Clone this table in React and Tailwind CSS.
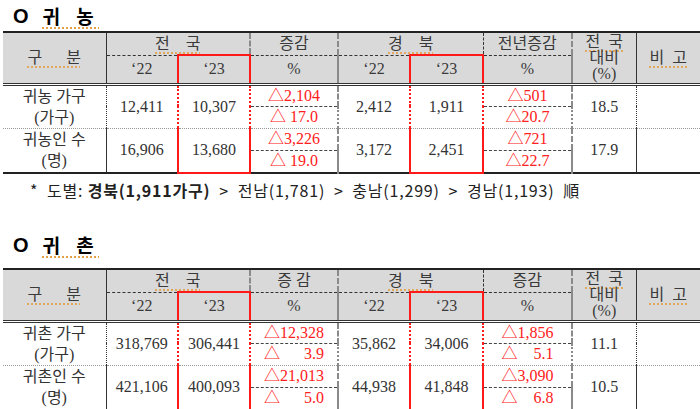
import React from 'react';

const serif = "font-['Liberation_Serif','Noto_Sans_CJK_KR',serif]";
const spell = 'underline decoration-dotted decoration-[#e39b3c] underline-offset-[4px]';

const farmData = {
  title: '귀 농',
  diffHead: '증감',
  diffHead2: '전년증감',
  rows: [
    { l1: '귀농 가구', l2: '(가구)', a: '12,411', b: '10,307', d1: '△2,104', d2: { t: '△ 17.0' }, e: '2,412', f: '1,911', g1: '△501', g2: { t: '△20.7' }, h: '18.5' },
    { l1: '귀농인 수', l2: '(명)', a: '16,906', b: '13,680', d1: '△3,226', d2: { t: '△ 19.0' }, e: '3,172', f: '2,451', g1: '△721', g2: { t: '△22.7' }, h: '17.9' },
  ],
};

const villageData = {
  title: '귀 촌',
  diffHead: '증 감',
  diffHead2: '증감',
  rows: [
    { l1: '귀촌 가구', l2: '(가구)', a: '318,769', b: '306,441', d1: '△12,328', d2: { n: '3.9', w: 60 }, e: '35,862', f: '34,006', g1: '△1,856', g2: { n: '5.1', w: 52 }, h: '11.1' },
    { l1: '귀촌인 수', l2: '(명)', a: '421,106', b: '400,093', d1: '△21,013', d2: { n: '5.0', w: 60 }, e: '44,938', f: '41,848', g1: '△3,090', g2: { n: '6.8', w: 52 }, h: '10.5' },
  ],
};

function Pct({ v }) {
  if (v.t) return <span>{v.t}</span>;
  return (
    <span className="inline-flex justify-between" style={{ width: v.w }}>
      <span>△</span>
      <span>{v.n}</span>
    </span>
  );
}

function Title({ text }) {
  return (
    <div className="flex items-center gap-[14px] pl-[13px] text-[19px] leading-[24px] font-bold text-black">
      <span className="font-['Liberation_Sans',sans-serif] text-[20px]">O</span>
      <span className={`font-['Noto_Sans_CJK_KR',sans-serif] tracking-[6px] ${spell}`}>{text}</span>
    </div>
  );
}

function DataTable({ data }) {
  const hd = 'bg-[#d9d9d9] text-[#3a3a3a] text-[16px] leading-[18px] text-center align-middle p-0';
  const td = 'text-[#333] text-[16px] leading-[18px] text-center align-middle p-0';
  const red = 'text-[#ff2020] text-[16px] leading-[18px] text-center align-middle p-0';
  const dbl = 'border-b-[3px] border-b-[#333] border-double';
  return (
    <table className={`ml-[3px] w-[697px] table-fixed border-collapse border-t-2 border-b-2 border-[#222] ${serif}`}>
      <colgroup>
        <col className="w-[103px]" />
        <col className="w-[72px]" />
        <col className="w-[72px]" />
        <col className="w-[88px]" />
        <col className="w-[72px]" />
        <col className="w-[73px]" />
        <col className="w-[89px]" />
        <col className="w-[64px]" />
        <col className="w-[64px]" />
      </colgroup>
      <thead>
        <tr className="h-[23px]">
          <td rowSpan={2} className={`${hd} ${dbl} border-r border-r-[#333]`}>
            <span className={`${spell} whitespace-pre`}>구      분</span>
          </td>
          <td colSpan={2} className={`${hd} border-b border-dashed border-b-[#333] border-r-2 border-r-[#8a8a8a]`}>
            <span className={`${spell} whitespace-pre`}>전    국</span>
          </td>
          <td className={`${hd} border-b border-dashed border-b-[#333] border-r-2 border-r-[#8a8a8a] whitespace-pre`}>
            {data.diffHead}
          </td>
          <td colSpan={2} className={`${hd} border-b border-dashed border-b-[#333] border-r border-r-[#333]`}>
            <span className={`${spell} whitespace-pre`}>경    북</span>
          </td>
          <td className={`${hd} border-b border-dashed border-b-[#333] border-r-2 border-r-[#8a8a8a]`}>
            {data.diffHead2}
          </td>
          <td rowSpan={2} className={`${hd} ${dbl} border-r border-r-[#333] text-[14px]`}>
            <div className={`${spell} whitespace-pre leading-[16px]`}>전  국</div>
            <div className="leading-[16px]">대비</div>
            <div className="leading-[16px]">(%)</div>
          </td>
          <td rowSpan={2} className={`${hd} ${dbl}`}>
            <span className={`${spell} whitespace-pre`}>비  고</span>
          </td>
        </tr>
        <tr className="h-[29px]">
          <td className={`${hd} ${dbl}`}>‘22</td>
          <td className={`${hd} ${dbl} border-x-2 border-x-[#ff1a1a] border-t-2 border-t-[#ff1a1a]`}>‘23</td>
          <td className={`${hd} ${dbl} border-r-2 border-r-[#8a8a8a]`}>%</td>
          <td className={`${hd} ${dbl}`}>‘22</td>
          <td className={`${hd} ${dbl} border-x-2 border-x-[#ff1a1a] border-t-2 border-t-[#ff1a1a]`}>‘23</td>
          <td className={`${hd} ${dbl} border-r-2 border-r-[#8a8a8a]`}>%</td>
        </tr>
      </thead>
      <tbody>
        {data.rows.map((r, i) => {
          const last = i === data.rows.length - 1;
          const sep = last ? '' : 'border-b border-dotted border-b-[#9a9a9a]';
          return (
            <React.Fragment key={i}>
              <tr className="h-[22px]">
                <td rowSpan={2} className={`${td} ${sep} border-r border-r-[#333]`}>
                  <div className="whitespace-pre leading-[21px]">{r.l1}</div>
                  <div className="leading-[21px]">{r.l2}</div>
                </td>
                <td rowSpan={2} className={`${td} ${sep}`}>{r.a}</td>
                <td rowSpan={2} className={`${td} ${sep} border-x-2 border-x-[#ff1a1a] ${last ? 'border-b-2 border-b-[#ff1a1a]' : ''}`}>{r.b}</td>
                <td className={`${red} border-b border-dashed border-b-[#444] border-r-2 border-r-[#8a8a8a]`}>{r.d1}</td>
                <td rowSpan={2} className={`${td} ${sep}`}>{r.e}</td>
                <td rowSpan={2} className={`${td} ${sep} border-x-2 border-x-[#ff1a1a] ${last ? 'border-b-2 border-b-[#ff1a1a]' : ''}`}>{r.f}</td>
                <td className={`${red} border-b border-dashed border-b-[#444] border-r-2 border-r-[#8a8a8a]`}>{r.g1}</td>
                <td rowSpan={2} className={`${td} ${sep} border-r border-r-[#333]`}>{r.h}</td>
                <td rowSpan={2} className={`${td} ${sep}`}></td>
              </tr>
              <tr className={last ? 'h-[23px]' : 'h-[22px]'}>
                <td className={`${red} ${sep} border-r-2 border-r-[#8a8a8a]`}><Pct v={r.d2} /></td>
                <td className={`${red} ${sep} border-r-2 border-r-[#8a8a8a]`}><Pct v={r.g2} /></td>
              </tr>
            </React.Fragment>
          );
        })}
      </tbody>
    </table>
  );
}

export default function App() {
  return (
    <div className="w-[700px] h-[409px] overflow-hidden bg-white">
      <div className="h-[31px] flex items-center">
        <Title text={farmData.title} />
      </div>
      <DataTable data={farmData} />
      <div className="h-[32px] flex items-center pl-[30px] text-[16px] leading-[20px] tracking-[0.8px] text-[#222] font-['Noto_Sans_CJK_KR',sans-serif] whitespace-pre">
        <span>*  도별: </span>
        <span className="font-bold">경북(1,911가구)</span>
        <span>  &gt;  전남(1,781)  &gt;  충남(1,299)  &gt;  경남(1,193)  順</span>
      </div>
      <div className="h-[62px] pt-[16px] flex items-center">
        <Title text={villageData.title} />
      </div>
      <DataTable data={villageData} />
    </div>
  );
}
